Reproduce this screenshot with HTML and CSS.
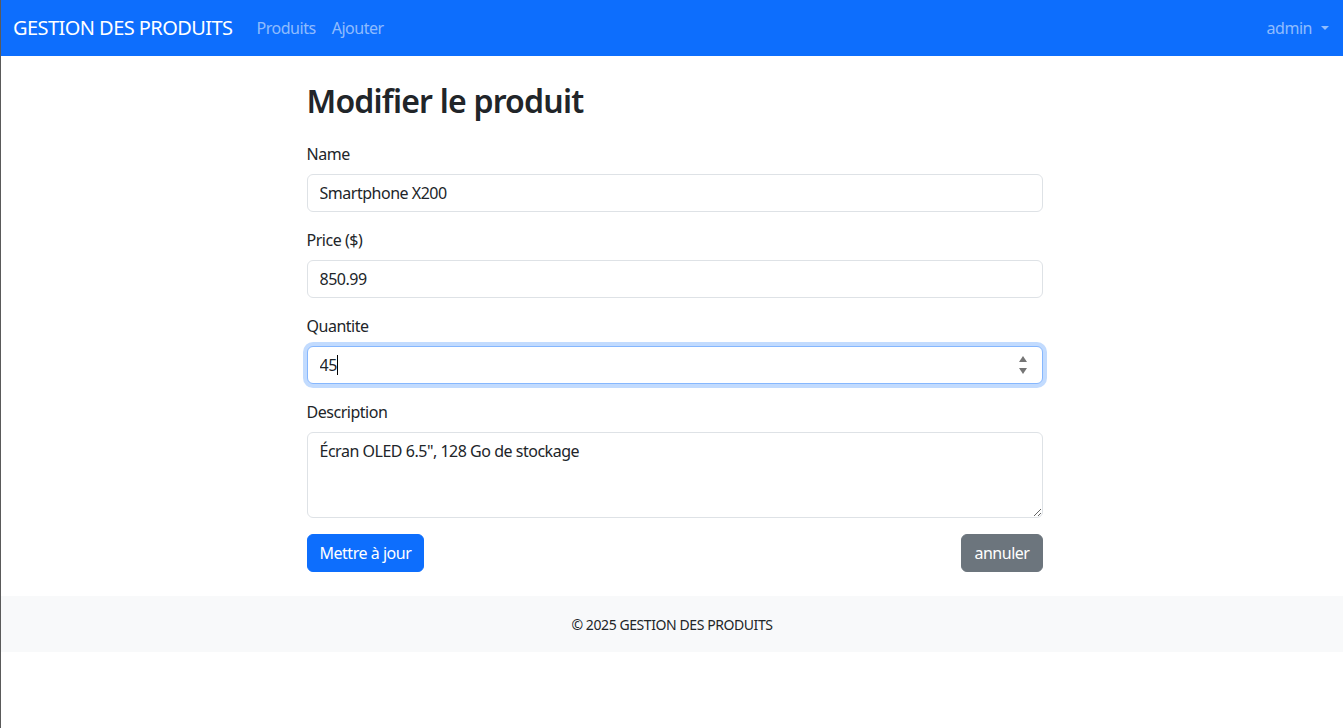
FILE: index.html
```html
<!DOCTYPE html>
<html lang="fr">
<head>
<meta charset="utf-8">
<title>Modifier le produit</title>
<link rel="stylesheet" href="styles.css">
</head>
<body>
<div class="page">
  <nav class="navbar">
    <a class="brand" href="#">GESTION DES PRODUITS</a>
    <ul class="nav">
      <li><a class="nav-link" href="#">Produits</a></li>
      <li><a class="nav-link" href="#">Ajouter</a></li>
    </ul>
    <div class="nav-right">
      <a class="nav-link dropdown" href="#">admin<span class="caret"></span></a>
    </div>
  </nav>

  <main class="main">
    <div class="content">
      <h2 class="title">Modifier le produit</h2>
      <form class="form">
        <div class="group">
          <label class="label">Name</label>
          <input class="control" type="text" value="Smartphone X200">
        </div>
        <div class="group">
          <label class="label">Price ($)</label>
          <input class="control" type="text" value="850.99">
        </div>
        <div class="group">
          <label class="label">Quantite</label>
          <div class="num-wrap">
            <input class="control focused" type="text" value="45">
            <span class="cursor"></span>
            <span class="spin">
              <svg width="10" height="22" viewBox="0 0 10 22"><path d="M1 8 L5 2 L9 8 Z" fill="#757575"/><path d="M1 14 L5 20 L9 14 Z" fill="#757575"/></svg>
            </span>
          </div>
        </div>
        <div class="group">
          <label class="label">Description</label>
          <textarea class="control area" rows="3">Écran OLED 6.5", 128 Go de stockage</textarea>
        </div>
        <div class="actions">
          <button type="button" class="btn btn-primary">Mettre à jour</button>
          <button type="button" class="btn btn-secondary">annuler</button>
        </div>
      </form>
    </div>
  </main>

  <footer class="footer">© 2025 GESTION DES PRODUITS</footer>
</div>
</body>
</html>
```

FILE: styles.css
```css
* { box-sizing: border-box; }
html, body { margin: 0; padding: 0; }
body {
  font-family: "Noto Sans", "Open Sans", "Liberation Sans", sans-serif;
  font-size: 16px;
  line-height: 1.5;
  letter-spacing: -0.03em;
  color: #212529;
  background: #fff;
}
.page {
  min-height: 728px;
  border-left: 1px solid #5a5a5a;
}
.navbar {
  height: 56px;
  background: #0d6efd;
  display: flex;
  align-items: center;
  padding: 0 12px;
}
.brand {
  color: #fff;
  font-size: 20px;
  letter-spacing: -0.028em;
  text-decoration: none;
  margin-right: 16px;
  line-height: 30px;
}
.nav {
  list-style: none;
  display: flex;
  margin: 0;
  padding: 0;
}
.nav-link {
  display: block;
  padding: 8px;
  color: rgba(255,255,255,.55);
  text-decoration: none;
}
.nav-right { margin-left: auto; }
.dropdown { display: flex; align-items: center; padding-right: 2px; }
.caret {
  display: inline-block;
  margin-left: 9px;
  border-top: 4.8px solid rgba(255,255,255,.55);
  border-left: 4.8px solid transparent;
  border-right: 4.8px solid transparent;
  width: 0; height: 0;
}
.main {
  display: flex;
  justify-content: center;
  padding-left: 5px;
  padding-top: 26px;
  padding-bottom: 24px;
}
.content { width: 736px; }
.title {
  font-size: 32px;
  font-weight: 600;
  line-height: 1.2;
  letter-spacing: -0.025em;
  margin: 0 0 22px 0;
}
.group { margin-bottom: 16px; }
.label {
  display: block;
  margin-bottom: 8px;
  line-height: 24px;
}
.control {
  display: block;
  width: 100%;
  height: 38px;
  padding: 6px 12px;
  font: inherit;
  font-size: 16px;
  line-height: 24px;
  letter-spacing: -0.03em;
  color: #212529;
  background: #fff;
  border: 1px solid #dee2e6;
  border-radius: 6px;
  outline: none;
}
.focused {
  border-color: #86b7fe;
  box-shadow: 0 0 0 4px rgba(13,110,253,.25);
}
.num-wrap { position: relative; }
.cursor {
  position: absolute;
  left: 30px;
  top: 9px;
  width: 1px;
  height: 20px;
  background: #000;
}
.spin {
  position: absolute;
  right: 15px;
  top: 8px;
  display: block;
  line-height: 0;
}
.area {
  height: 86px;
  resize: vertical;
}
.actions {
  display: flex;
  justify-content: space-between;
  margin-top: 16px;
}
.btn {
  font: inherit;
  font-size: 16px;
  line-height: 24px;
  letter-spacing: -0.03em;
  padding: 6px 12px;
  border: 1px solid transparent;
  border-radius: 6px;
  color: #fff;
  cursor: pointer;
}
.btn-primary { background: #0d6efd; border-color: #0d6efd; }
.btn-secondary { background: #6c757d; border-color: #6c757d; }
.footer {
  background: #f8f9fa;
  text-align: center;
  font-size: 14px;
  letter-spacing: -0.03em;
  line-height: 24px;
  padding: 17px 0 15px;
}
```
